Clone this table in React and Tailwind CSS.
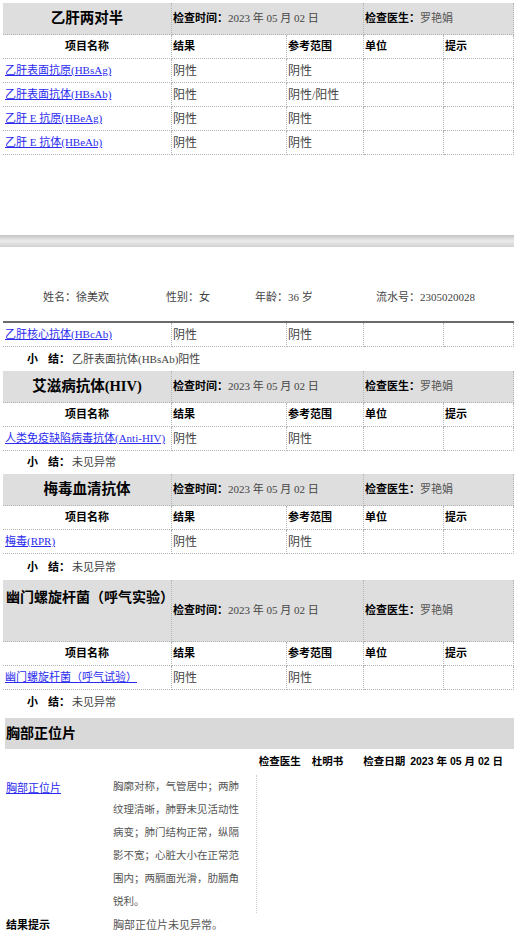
import React from "react";

const serif = "font-['Liberation_Serif','Noto_Sans_CJK_SC',serif]";
const sans = "font-['Liberation_Sans','Noto_Sans_CJK_SC',sans-serif]";
const grid = "grid grid-cols-[169px_115px_77px_80px_1fr]";
const cell = "border-r border-b border-dotted border-[#b4b4b4] flex items-center";

const HeadRow = ({ title, tall }) => (
  <div className={`${grid} bg-[#dedede] ${tall ? "h-[62px]" : "h-[32px]"}`}>
    {tall ? (
      <div className={`${cell} items-start pt-[7px] pl-[3px] text-[14px] font-bold text-black`}>{title}</div>
    ) : (
      <div className={`${cell} justify-center text-[14.5px] font-bold text-black`}>{title}</div>
    )}
    <div className={`${cell} col-span-2 pl-[1px] text-[11px]`}>
      <span className="font-bold text-black">检查时间：</span>
      <span className="text-[#444]">2023 年 05 月 02 日</span>
    </div>
    <div className={`${cell} col-span-2 pl-[1px] text-[11px]`}>
      <span className="font-bold text-black">检查医生：</span>
      <span className="text-[#555]">罗艳娟</span>
    </div>
  </div>
);

const ColHead = () => (
  <div className={`${grid} h-[24px] text-[11px] font-bold text-black`}>
    <div className={`${cell} justify-center`}>项目名称</div>
    <div className={`${cell} pl-[1px]`}>结果</div>
    <div className={`${cell} pl-[1px]`}>参考范围</div>
    <div className={`${cell} pl-[1px]`}>单位</div>
    <div className={`${cell} pl-[1px]`}>提示</div>
  </div>
);

const DataRow = ({ name, result = "阴性", range = "阴性" }) => (
  <div className={`${grid} h-[24px]`}>
    <div className={`${cell} pl-[2px]`}>
      <a href="#" className="text-[11px] text-[#2b2bf0] underline underline-offset-1">{name}</a>
    </div>
    <div className={`${cell} pl-[1px] text-[12px] text-[#444]`}>{result}</div>
    <div className={`${cell} pl-[1px] text-[12px] text-[#444]`}>{range}</div>
    <div className={cell}></div>
    <div className={cell}></div>
  </div>
);

const Summary = ({ text, h = "h-[24px]" }) => (
  <div className={`flex items-center ${h} pl-[24px] text-[11px]`}>
    <span className="font-bold text-black">小</span>
    <span className="w-[10px]"></span>
    <span className="font-bold text-black">结：</span>
    <span className="ml-[2px] text-[#444]">{text}</span>
  </div>
);

export default function App() {
  return (
    <div className={`${serif} w-[514px] h-[938px] overflow-hidden bg-white pt-[3px]`}>
      <div className="pl-[3px]">
        <HeadRow title="乙肝两对半" />
        <ColHead />
        <DataRow name="乙肝表面抗原(HBsAg)" />
        <DataRow name="乙肝表面抗体(HBsAb)" result="阳性" range="阴性/阳性" />
        <DataRow name="乙肝 E 抗原(HBeAg)" />
        <DataRow name="乙肝 E 抗体(HBeAb)" />
      </div>

      <div className="h-[80px]"></div>
      <div className="h-[12px] bg-gradient-to-b from-[#c4c4c4] via-[#ececec] to-[#d2d2d2]"></div>
      <div className="h-[40px]"></div>

      <div className="flex items-center h-[20px] pl-[43px] text-[11px] text-[#444]">
        <span className="w-[123px]">姓名：徐美欢</span>
        <span className="w-[89px]">性别：女</span>
        <span className="w-[121px]">年龄：36 岁</span>
        <span>流水号：2305020028</span>
      </div>
      <div className="h-[14px]"></div>

      <div className="pl-[3px]">
        <div className="h-[2px] bg-[#6a6a6a]"></div>
        <DataRow name="乙肝核心抗体(HBcAb)" />
        <Summary text="乙肝表面抗体(HBsAb)阳性" />

        <HeadRow title="艾滋病抗体(HIV)" />
        <ColHead />
        <DataRow name="人类免疫缺陷病毒抗体(Anti-HIV)" />
        <Summary text="未见异常" h="h-[23px]" />

        <HeadRow title="梅毒血清抗体" />
        <ColHead />
        <DataRow name="梅毒(RPR)" />
        <Summary text="未见异常" h="h-[26px]" />

        <HeadRow title="幽门螺旋杆菌（呼气实验）" tall />
        <ColHead />
        <DataRow name="幽门螺旋杆菌（呼气试验）" />
        <Summary text="未见异常" />
      </div>

      <div className="mt-[4px] ml-[5px] h-[31px] bg-[#d9d9d9] flex items-center pl-[1px] text-[14px] font-bold text-black">
        胸部正位片
      </div>

      <div className={`${sans} flex items-center justify-end h-[26px] pr-[11px] text-[10.5px] font-bold text-black`}>
        <span>检查医生</span>
        <span className="ml-[11px]">杜明书</span>
        <span className="ml-[20px]">检查日期</span>
        <span className="ml-[5px]">2023 年 05 月 02 日</span>
      </div>

      <div className="flex pl-[6px]">
        <div className="w-[107px] leading-[23px]">
          <a href="#" className="text-[11px] text-[#2b2bf0] underline underline-offset-1">胸部正位片</a>
        </div>
        <div className="w-[144px] h-[138px] border-r border-dotted border-[#cfcfcf]">
          <p className="w-[130px] text-[10.5px] leading-[23px] text-[#555]">
            胸廓对称，气管居中；两肺纹理清晰，肺野未见活动性病变；肺门结构正常，纵隔影不宽；心脏大小在正常范围内；两膈面光滑，肋膈角锐利。
          </p>
        </div>
      </div>

      <div className="flex items-center h-[24px] pl-[6px] text-[11px]">
        <span className={`${sans} w-[107px] font-bold text-black`}>结果提示</span>
        <span className="text-[#555]">胸部正位片未见异常。</span>
      </div>
    </div>
  );
}
